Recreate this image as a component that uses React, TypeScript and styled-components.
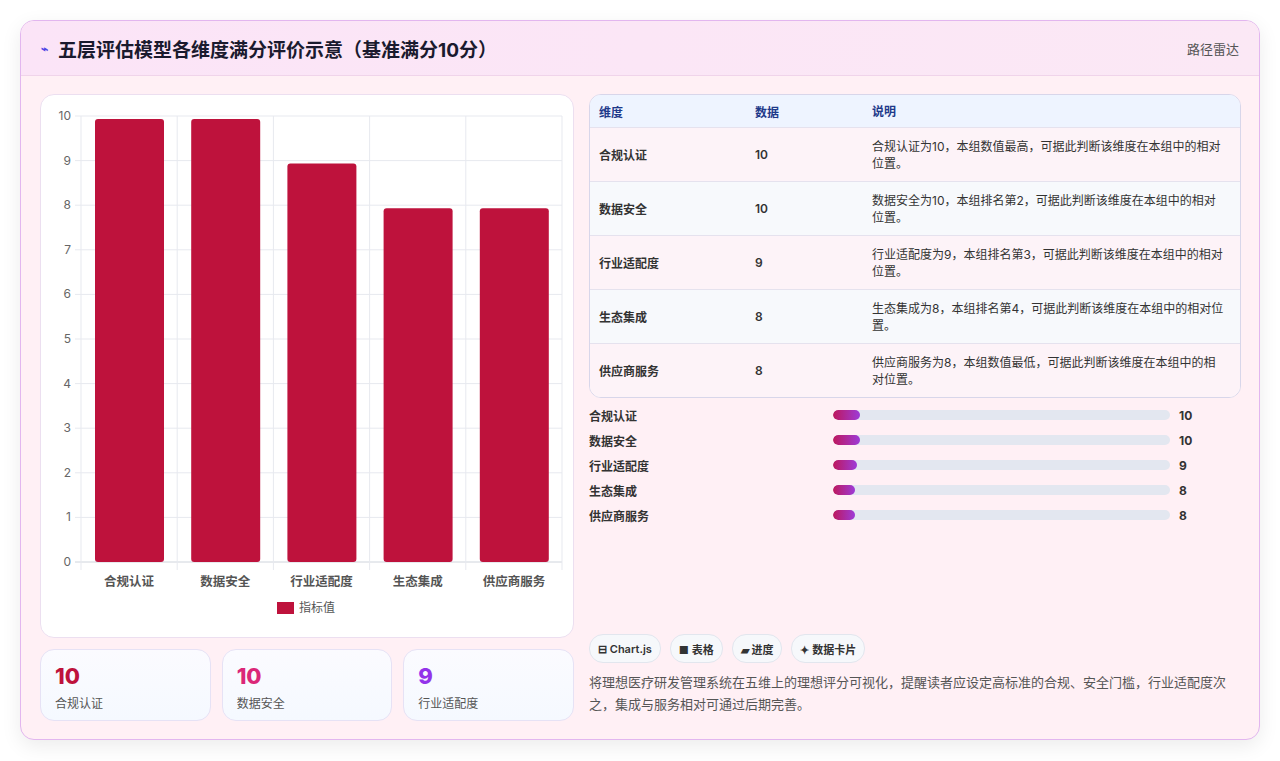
import React from "react";
import styled, { createGlobalStyle } from "styled-components";

const G = createGlobalStyle`
  body { margin:0; background:#fff; font-family: Inter, "Noto Sans CJK SC", sans-serif; }
`;
const data = [
  { n: "合规认证", v: 10, d: "合规认证为10，本组数值最高，可据此判断该维度在本组中的相对位置。" },
  { n: "数据安全", v: 10, d: "数据安全为10，本组排名第2，可据此判断该维度在本组中的相对位置。" },
  { n: "行业适配度", v: 9, d: "行业适配度为9，本组排名第3，可据此判断该维度在本组中的相对位置。" },
  { n: "生态集成", v: 8, d: "生态集成为8，本组排名第4，可据此判断该维度在本组中的相对位置。" },
  { n: "供应商服务", v: 8, d: "供应商服务为8，本组数值最低，可据此判断该维度在本组中的相对位置。" },
];
const Page = styled.div`padding:20px 20px 21px 20px;`;
const Card = styled.div`
  border:1px solid #e2b6ef; border-radius:14px; overflow:hidden; background:#fff0f5;
  box-shadow:0 6px 20px rgba(0,0,0,0.08); height:718px; display:flex; flex-direction:column;
`;
const Header = styled.div`
  height:54px; flex:none; display:flex; align-items:center; justify-content:space-between;
  padding:0 20px; background:linear-gradient(90deg,#fbe4f7,#fbe8f5); border-bottom:1px solid #f0d4ea;
`;
const Title = styled.div`font-size:19px; font-weight:700; color:#1a1a2e; display:flex; align-items:center; gap:10px;`;
const Tag = styled.div`font-size:13px; color:#555;`;
const Body = styled.div`flex:1; display:grid; grid-template-columns:534px 652px; gap:15px; padding:18px 19px 18px 19px;`;
const Col = styled.div`display:flex; flex-direction:column; gap:11px;`;
const ChartCard = styled.div`height:542px; background:#fff; border:1px solid #ecdff0; border-radius:14px; position:relative;`;
const Stats = styled.div`display:grid; grid-template-columns:repeat(3,1fr); gap:11px;`;
const Stat = styled.div`height:72px; border:1px solid #e6e2f5; border-radius:14px; background:linear-gradient(#fbfbff,#f5f9ff); padding:12px 14px; box-sizing:border-box;`;
const Num = styled.div<{ c: string }>`font-size:22px; font-weight:800; color:${p => p.c}; line-height:28px;`;
const SL = styled.div`font-size:12px; color:#555; margin-top:4px;`;
const Table = styled.div`border:1px solid #d8d6ea; border-radius:12px; overflow:hidden; background:#fff;`;
const Row = styled.div<{ h?: boolean; alt?: boolean }>`
  display:grid; grid-template-columns:156px 117px 1fr; padding:0 9px;
  height:${p => (p.h ? 32 : 53)}px; align-items:center; font-size:12px;
  background:${p => (p.h ? "#eef4ff" : p.alt ? "#f7f9fc" : "#fdf3f8")};
  color:${p => (p.h ? "#1e3a8a" : "#333")}; font-weight:${p => (p.h ? 600 : 400)};
  border-top:${p => (p.h ? "none" : "1px solid #e5e2ee")};
  & > span:nth-child(-n+2){ font-weight:600; }
  & > span:last-child{ line-height:17px; padding-right:6px; }
`;
const Bars = styled.div`display:flex; flex-direction:column; gap:7px; margin-top:8px;`;
const BarRow = styled.div`display:grid; grid-template-columns:244px 337px 1fr; gap:0 0; align-items:center; height:18px; font-size:12px; color:#333; font-weight:600;`;
const Track = styled.div`height:10px; background:#e3e7f0; border-radius:5px; overflow:hidden;`;
const Fill = styled.div`height:100%; border-radius:5px; background:linear-gradient(90deg,#be185d,#9d3bd8);`;
const BV = styled.span`padding-left:9px; font-size:12px; font-weight:700;`;
const Spacer = styled.div`flex:1;`;
const Chips = styled.div`display:flex; gap:9px;`;
const Chip = styled.div`height:27px; padding:0 8px; border:1px solid #e2e6ee; border-radius:14px; background:#f6f8fb; font-size:11px; font-weight:600; color:#333; display:flex; align-items:center; gap:3px;`;
const Desc = styled.div`font-size:13px; line-height:22px; color:#555; margin-top:8px; margin-bottom:6px;`;

const Chart = () => {
  const x0 = 40, y0 = 21, w = 481, h = 446;
  const cw = w / 5;
  return (
    <svg width="534" height="542" style={{ display: "block" }}>
      {Array.from({ length: 11 }, (_, i) => {
        const y = y0 + h - (i * h) / 10;
        return (
          <g key={i}>
            <line x1={x0 - 6} x2={x0 + w} y1={y} y2={y} stroke={i === 0 ? "#cfd4dc" : "#e7e9ef"} />
            <text x={x0 - 10} y={y + 4} fontSize="12" fill="#666" textAnchor="end" fontFamily="Inter, sans-serif">{i}</text>
          </g>
        );
      })}
      {Array.from({ length: 6 }, (_, i) => (
        <line key={i} x1={x0 + i * cw} x2={x0 + i * cw} y1={y0} y2={y0 + h + 8} stroke="#e7e9ef" />
      ))}
      {data.map((d, i) => {
        const bh = (d.v * h) / 10;
        return (
          <g key={i}>
            <rect x={x0 + i * cw + 14} y={y0 + h - bh + 3} width={69} height={bh - 3} rx={3} fill="#be123c" />
            <text x={x0 + i * cw + cw / 2} y={y0 + h + 24} fontSize="12.5" fill="#555" textAnchor="middle" fontWeight="600" fontFamily="Inter, 'Noto Sans CJK SC', sans-serif">{d.n}</text>
          </g>
        );
      })}
      <rect x={236} y={507} width={17} height={12} fill="#be123c" />
      <text x={258} y={517} fontSize="12" fill="#555" fontFamily="'Noto Sans CJK SC', sans-serif">指标值</text>
    </svg>
  );
};

export default function App() {
  const colors = ["#be123c", "#db2777", "#9333ea"];
  return (
    <Page>
      <G />
      <Card>
        <Header>
          <Title><span style={{ fontSize: 12, color: "#4f46e5" }}>⌁</span>五层评估模型各维度满分评价示意（基准满分10分）</Title>
          <Tag>路径雷达</Tag>
        </Header>
        <Body>
          <Col>
            <ChartCard><Chart /></ChartCard>
            <Stats>
              {data.slice(0, 3).map((d, i) => (
                <Stat key={i}><Num c={colors[i]}>{d.v}</Num><SL>{d.n}</SL></Stat>
              ))}
            </Stats>
          </Col>
          <Col style={{ gap: 0 }}>
            <Table>
              <Row h><span>维度</span><span>数据</span><span>说明</span></Row>
              {data.map((d, i) => (
                <Row key={i} alt={i % 2 === 1}><span>{d.n}</span><span>{d.v}</span><span>{d.d}</span></Row>
              ))}
            </Table>
            <Bars>
              {data.map((d, i) => (
                <BarRow key={i}><span>{d.n}</span><Track><Fill style={{ width: `${d.v * 0.8}%` }} /></Track><BV>{d.v}</BV></BarRow>
              ))}
            </Bars>
            <Spacer />
            <Chips>
              <Chip>⊟ Chart.js</Chip><Chip>■ 表格</Chip><Chip>▰ 进度</Chip><Chip>✦ 数据卡片</Chip>
            </Chips>
            <Desc>将理想医疗研发管理系统在五维上的理想评分可视化，提醒读者应设定高标准的合规、安全门槛，行业适配度次之，集成与服务相对可通过后期完善。</Desc>
          </Col>
        </Body>
      </Card>
    </Page>
  );
}
